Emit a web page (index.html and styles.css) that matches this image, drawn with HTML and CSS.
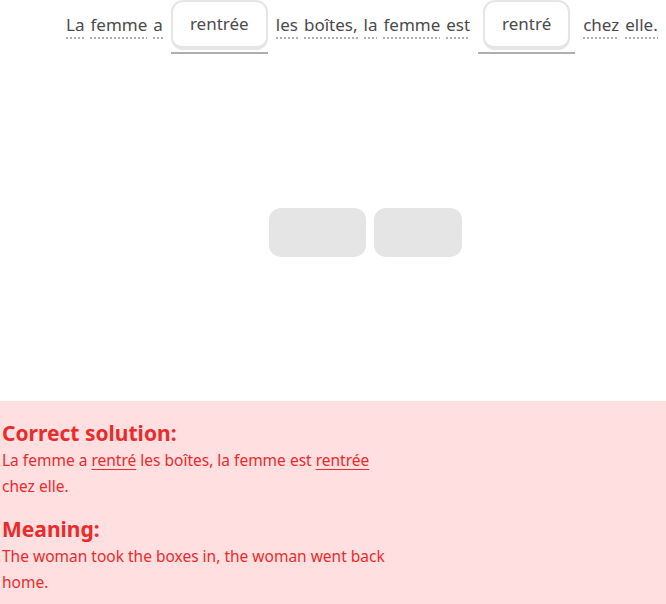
FILE: index.html
```html
<!DOCTYPE html>
<html>
<head>
<meta charset="utf-8">
<link rel="stylesheet" href="styles.css">
</head>
<body>
<div class="page">
  <div class="sentence">
    <span class="w">La</span><span class="w">femme</span><span class="w">a</span>
    <span class="slot s1"><span class="chip c1">rentrée</span></span>
    <span class="w first">les</span><span class="w">boîtes,</span><span class="w">la</span><span class="w">femme</span><span class="w">est</span>
    <span class="slot s2"><span class="chip c2">rentré</span></span>
    <span class="w first">chez</span><span class="w">elle.</span>
  </div>
  <div class="bank">
    <span class="empty e1"></span>
    <span class="empty e2"></span>
  </div>
  <div class="feedback">
    <h2 class="fh">Correct solution:</h2>
    <p class="ft">La femme a <u>rentré</u> les boîtes, la femme est <u>rentrée</u> chez elle.</p>
    <h2 class="fh fh2">Meaning:</h2>
    <p class="ft">The woman took the boxes in, the woman went back home.</p>
  </div>
</div>
</body>
</html>
```
FILE: styles.css
```css
html, body { margin: 0; padding: 0; background: #fff; }
body { font-family: "Noto Sans", "DejaVu Sans", sans-serif; width: 666px; height: 604px; overflow: hidden; }
.page { display: flex; flex-direction: column; height: 604px; }
.sentence {
  display: flex; align-items: flex-start; white-space: nowrap;
  padding-left: 66px; height: 56px; font-size: 17px; color: #4b4b4b;
}
.w {
  margin-top: 13px; margin-left: 6px; line-height: 23px; padding-bottom: 3px;
  background-image: repeating-linear-gradient(to right, #afafaf 0 2px, transparent 2px 4px);
  background-size: 100% 2px; background-repeat: no-repeat; background-position: 0 100%;
}
.w:first-child, .w.first { margin-left: 0; }
.slot {
  display: flex; justify-content: center; width: 97px; height: 52px;
  border-bottom: 2px solid #afafaf; margin: 0 8px;
}
.chip {
  display: flex; align-items: center; justify-content: center; box-sizing: border-box;
  height: 50px; border: 2px solid #e5e5e5; border-bottom-width: 4px; border-radius: 12px;
  color: #4b4b4b; font-size: 17px; padding-bottom: 1px;
}
.c1 { width: 97px; }
.c2 { width: 87px; }
.bank { display: flex; gap: 8px; padding-left: 269px; margin-top: 152px; }
.empty { display: block; height: 49px; background: #e5e5e5; border-radius: 12px; }
.e1 { width: 97px; }
.e2 { width: 88px; }
.feedback {
  margin-top: auto; height: 203px; box-sizing: border-box; background: #ffdfe0;
  color: #ea2b2b; padding: 18px 0 0 2px;
}
.fh { margin: 0; font-size: 21px; font-weight: 700; line-height: 28px; }
.fh2 { margin-top: 16px; }
.ft { margin: 0; width: 400px; font-size: 15.5px; line-height: 26px; }
.ft u { text-decoration-thickness: 1px; text-underline-offset: 3px; }
```
